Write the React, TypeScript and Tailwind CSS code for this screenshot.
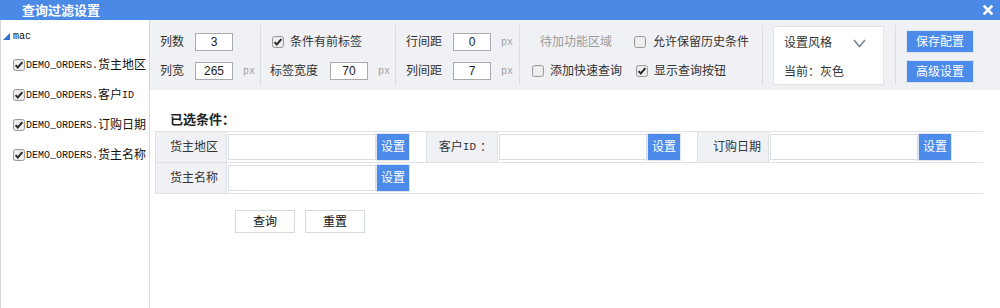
import React from "react";

const CB = ({ checked }: { checked: boolean }) => (
  <svg width="12" height="12" viewBox="0 0 12 12" className="shrink-0">
    <rect x="0.5" y="0.5" width="11" height="11" rx="2" fill="#dcdcdc" stroke="#9c9c9c" />
    <rect x="1.5" y="1.5" width="9" height="9" rx="1" fill="#efefef" />
    {checked && (
      <path d="M2.6 6.1 L4.8 8.4 L9.4 3.2" fill="none" stroke="#2b2b2b" strokeWidth="2" />
    )}
  </svg>
);

const Px = () => (
  <span className="ml-[10px] text-[10px] text-[#a0a0a0] font-['Liberation_Mono',monospace]">px</span>
);

const Inp = ({ v }: { v: string }) => (
  <div className="w-[38px] h-[18px] bg-white border border-[#aaaaaa] flex items-center justify-center text-[12px] text-[#222] font-['Liberation_Sans',sans-serif]">
    {v}
  </div>
);

const Sep = () => <div className="w-px bg-[#dcdde2] my-[5px]" />;

const TreeItem = ({ name }: { name: string }) => (
  <div className="h-[30px] flex items-center pl-[12px]">
    <CB checked />
    <span className="ml-[1px] text-[10px] text-[#111] font-['Liberation_Mono',monospace]">DEMO_ORDERS.</span>
    <span className="text-[12px] text-[#111]">{name}</span>
  </div>
);

const ValueCell = ({ last }: { last?: boolean }) => (
  <div className={(last ? "flex-1 " : "w-[199px] ") + "flex items-center pl-[1px]"}>
    <div className="w-[148px] h-[26px] bg-white border border-[#d9dde4]" />
    <div className="w-[34px] h-[28px] bg-[#4c8be9] border border-[#dfe5ef] flex items-center justify-center text-white text-[12px]">
      设置
    </div>
  </div>
);

const Label = ({ children, pr }: { children: React.ReactNode; pr: string }) => (
  <div className={"w-[72px] bg-[#f0f1f5] border-l border-r border-[#dfe1e6] flex items-center justify-end text-[12px] text-[#333] " + pr}>
    {children}
  </div>
);

export default function App() {
  return (
    <div className="w-[1000px] h-[308px] bg-white flex flex-col font-['Liberation_Sans','Noto_Sans_CJK_SC',sans-serif] text-[#333]">
      {/* title bar */}
      <div className="h-[20px] bg-[#4b89e7] flex items-center justify-between pl-[22px] pr-[7px]">
        <span className="text-white font-bold text-[13px] leading-none">查询过滤设置</span>
        <svg width="10" height="10" viewBox="0 0 10 10">
          <path d="M1.5 1.5 L8.5 8.5 M8.5 1.5 L1.5 8.5" stroke="#fff" strokeWidth="2.6" strokeLinecap="square" />
        </svg>
      </div>

      <div className="flex flex-1 min-h-0">
        {/* left tree */}
        <div className="w-[150px] border-l border-r border-[#d6d6d6] bg-white pt-[8px]">
          <div className="h-[16px] flex items-center pl-[2px]">
            <svg width="7" height="7" viewBox="0 0 7 7">
              <polygon points="0,7 7,0 7,7" fill="#2f6fd6" />
            </svg>
            <span className="ml-[3px] text-[10px] text-[#111] font-['Liberation_Mono',monospace]">mac</span>
          </div>
          <div className="mt-[6px]">
            <TreeItem name="货主地区" />
            <div className="h-[30px] flex items-center pl-[12px]">
              <CB checked />
              <span className="ml-[1px] text-[10px] text-[#111] font-['Liberation_Mono',monospace]">DEMO_ORDERS.</span>
              <span className="text-[12px] text-[#111]">客户</span>
              <span className="text-[10px] text-[#111] font-['Liberation_Mono',monospace]">ID</span>
            </div>
            <TreeItem name="订购日期" />
            <TreeItem name="货主名称" />
          </div>
        </div>

        {/* right side */}
        <div className="flex-1 flex flex-col">
          {/* toolbar */}
          <div className="h-[70px] bg-[#f0f1f5] flex text-[12px] text-[#333]">
            <div className="w-[110px] pl-[10px] pt-[13px] flex flex-col gap-[11px]">
              <div className="h-[18px] flex items-center">
                <span className="w-[35px]">列数</span>
                <Inp v="3" />
              </div>
              <div className="h-[18px] flex items-center">
                <span className="w-[35px]">列宽</span>
                <Inp v="265" />
                <Px />
              </div>
            </div>
            <Sep />
            <div className="w-[134px] pt-[13px] flex flex-col gap-[11px]">
              <div className="h-[18px] flex items-center pl-[11px]">
                <CB checked />
                <span className="ml-[6px]">条件有前标签</span>
              </div>
              <div className="h-[18px] flex items-center pl-[9px]">
                <span className="w-[60px]">标签宽度</span>
                <Inp v="70" />
                <Px />
              </div>
            </div>
            <Sep />
            <div className="w-[123px] pl-[10px] pt-[13px] flex flex-col gap-[11px]">
              <div className="h-[18px] flex items-center">
                <span className="w-[47px]">行间距</span>
                <Inp v="0" />
                <Px />
              </div>
              <div className="h-[18px] flex items-center">
                <span className="w-[47px]">列间距</span>
                <Inp v="7" />
                <Px />
              </div>
            </div>
            <Sep />
            <div className="w-[111px] pt-[13px] flex flex-col gap-[11px]">
              <div className="h-[18px] flex items-center pl-[20px] text-[#9a9a9a]">待加功能区域</div>
              <div className="h-[18px] flex items-center pl-[12px]">
                <CB checked={false} />
                <span className="ml-[6px]">添加快速查询</span>
              </div>
            </div>
            <div className="w-[131px] pt-[13px] flex flex-col gap-[11px]">
              <div className="h-[18px] flex items-center pl-[3px]">
                <CB checked={false} />
                <span className="ml-[7px]">允许保留历史条件</span>
              </div>
              <div className="h-[18px] flex items-center pl-[5px]">
                <CB checked />
                <span className="ml-[6px]">显示查询按钮</span>
              </div>
            </div>
            <Sep />
            <div className="w-[132px] pl-[10px] pt-[6px]">
              <div className="w-[111px] h-[59px] bg-white border border-[#e2e4e8] pl-[10px] pt-[7px] flex flex-col gap-[11px]">
                <div className="h-[18px] flex items-center">
                  <span>设置风格</span>
                  <svg className="ml-[21px]" width="13" height="9" viewBox="0 0 13 9">
                    <path d="M1 1 L6.5 7.5 L12 1" fill="none" stroke="#7a8696" strokeWidth="1.6" />
                  </svg>
                </div>
                <div className="h-[18px] flex items-center">当前：灰色</div>
              </div>
            </div>
            <Sep />
            <div className="pl-[10px] pt-[10px] flex flex-col gap-[7px]">
              <div className="w-[68px] h-[23px] bg-[#4c8be9] border border-[#dfe5ef] flex items-center justify-center text-white text-[12px]">
                保存配置
              </div>
              <div className="w-[68px] h-[23px] bg-[#4c8be9] border border-[#dfe5ef] flex items-center justify-center text-white text-[12px]">
                高级设置
              </div>
            </div>
          </div>

          {/* main area */}
          <div className="flex-1 pl-[5px] pr-[17px] pt-[22px]">
            <div className="h-[16px] pl-[15px] flex items-center text-[13px] font-bold text-[#222]">已选条件：</div>
            <div className="mt-[3px]">
              <div className="h-[31px] flex border-t border-[#dfe1e6]">
                <Label pr="pr-[8px]">货主地区</Label>
                <ValueCell />
                <Label pr="pr-[5px]">
                  <span>客户</span>
                  <span className="text-[11px] font-['Liberation_Mono',monospace]">ID</span>
                  <span className="ml-[4px]">：</span>
                </Label>
                <ValueCell />
                <Label pr="pr-[7px]">订购日期</Label>
                <ValueCell last />
              </div>
              <div className="h-[32px] flex border-t border-b border-[#dfe1e6]">
                <Label pr="pr-[8px]">货主名称</Label>
                <ValueCell />
              </div>
            </div>
            <div className="flex gap-[10px] pl-[80px] mt-[16px]">
              <div className="w-[60px] h-[23px] bg-white border border-[#d6dbe3] flex items-center justify-center text-[12px] text-[#111]">
                查询
              </div>
              <div className="w-[60px] h-[23px] bg-white border border-[#d6dbe3] flex items-center justify-center text-[12px] text-[#111]">
                重置
              </div>
            </div>
          </div>
        </div>
      </div>
    </div>
  );
}
